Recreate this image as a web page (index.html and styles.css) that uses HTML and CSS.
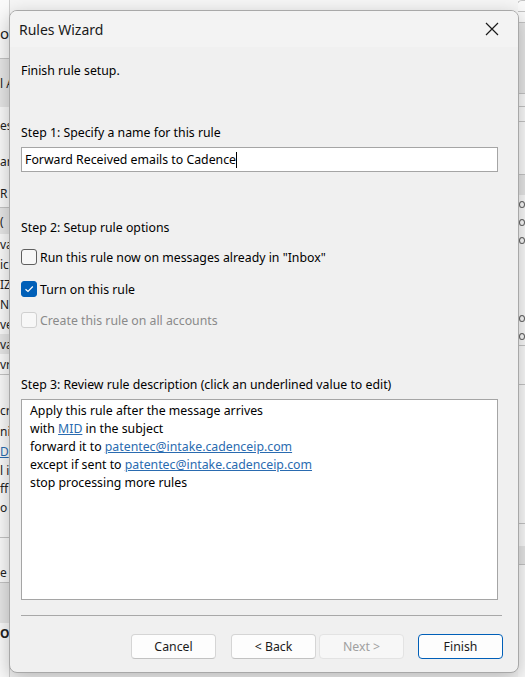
FILE: index.html
```html
<!DOCTYPE html>
<html lang="en">
<head>
  <meta charset="UTF-8">
  <meta name="viewport" content="width=device-width, initial-scale=1.0">
  <title>Rules Wizard</title>
  <link rel="stylesheet" href="styles.css">
</head>
<body>
  <!-- Outlook window behind the dialog -->
  <div class="desktop">
    <div class="left-pane">
      <div class="row h50 title-frag">ot</div>
      <div class="row h48 shade line-top">l A</div>
      <div class="row h36">es</div>
      <div class="row h36">ar</div>
      <div class="row h28">R</div>
      <div class="row h26 shade line-top">(</div>
      <div class="row h20">va</div>
      <div class="row h20">ic</div>
      <div class="row h20">IZ</div>
      <div class="row h20">N</div>
      <div class="row h20">ve</div>
      <div class="row h20 shade">va</div>
      <div class="row h20">vr</div>
      <div class="row h24 line-top"></div>
      <div class="row h22">cr</div>
      <div class="row h20">nis</div>
      <div class="row h20 link-frag">D</div>
      <div class="row h18">l i</div>
      <div class="row h18">ff</div>
      <div class="row h20">o</div>
      <div class="row h20"></div>
      <div class="row h24 line-top"></div>
      <div class="row h20">e</div>
      <div class="row h40 shade line-top"></div>
      <div class="row h20 bold">OI</div>
      <div class="row fill"></div>
    </div>
    <div class="middle"></div>
    <div class="right-pane">
      <div class="corner-box"></div>
      <div class="row h10 line-top"></div>
      <div class="row h70 shade line-top"></div>
      <div class="row h12 line-top"></div>
      <div class="row h14 line-top"></div>
      <div class="row h52 line-top"></div>
      <div class="row h20 shade line-top"></div>
      <div class="row h18 circle"><span class="dot"></span></div>
      <div class="row h18 circle"><span class="dot"></span></div>
      <div class="row h18 circle"><span class="dot"></span></div>
      <div class="row h60"></div>
      <div class="row h18 circle"><span class="dot"></span></div>
      <div class="row h18 circle"><span class="dot"></span></div>
      <div class="row h38 line-top"></div>
      <div class="row h138 line-top"></div>
      <div class="row h22 line-top"></div>
      <div class="row h18 shade"></div>
      <div class="row fill line-top"></div>
    </div>
  </div>

  <!-- Rules Wizard dialog -->
  <div class="dialog">
    <div class="title-bar">
      <span class="title">Rules Wizard</span>
      <span class="close">
        <svg width="14" height="14" viewBox="0 0 14 14">
          <path d="M1 1 L13 13 M13 1 L1 13" stroke="#1a1a1a" stroke-width="1.2" fill="none"/>
        </svg>
      </span>
    </div>

    <div class="dialog-body">
      <p class="intro">Finish rule setup.</p>

      <p class="step step-1">Step 1: Specify a name for this rule</p>
      <div class="name-input">Forward Received emails to Cadence<span class="caret"></span></div>

      <p class="step step-2">Step 2: Setup rule options</p>
      <label class="check-row first">
        <span class="box"></span>
        <span>Run this rule now on messages already in "Inbox"</span>
      </label>
      <label class="check-row">
        <span class="box checked">
          <svg width="10" height="8" viewBox="0 0 10 8">
            <path d="M1.5 4.2 L4 6.5 L8.8 1.5" stroke="#fff" stroke-width="1.2" fill="none"/>
          </svg>
        </span>
        <span>Turn on this rule</span>
      </label>
      <label class="check-row disabled">
        <span class="box"></span>
        <span>Create this rule on all accounts</span>
      </label>

      <p class="step step-3">Step 3: Review rule description (click an underlined value to edit)</p>
      <div class="description">
        <div>Apply this rule after the message arrives</div>
        <div>with <a href="#">MID</a> in the subject</div>
        <div>forward it to <a href="#">patentec@intake.cadenceip.com</a></div>
        <div>except if sent to <a href="#">patentec@intake.cadenceip.com</a></div>
        <div>stop processing more rules</div>
      </div>

      <div class="separator"></div>

      <div class="footer">
        <button class="btn">Cancel</button>
        <button class="btn back">&lt; Back</button>
        <button class="btn" disabled>Next &gt;</button>
        <button class="btn finish">Finish</button>
      </div>
    </div>
  </div>
</body>
</html>
```

FILE: styles.css
```css
/* General styling */
body {
  margin: 0;
  padding: 0;
  width: 525px;
  height: 677px;
  overflow: hidden;
  position: relative;
  font-family: 'Segoe UI', 'Noto Sans', sans-serif;
  font-size: 12.3px;
  color: #000;
  background-color: #f6f6f6;
}

/* Background window */
.desktop {
  display: flex;
  height: 677px;
}

.left-pane {
  width: 9px;
  display: flex;
  flex-direction: column;
  background-color: #fafafa;
  border-right: 1px solid #cfcfcf;
}

.middle {
  flex: 1;
  background-color: #f6f6f6;
}

.right-pane {
  width: 7px;
  display: flex;
  flex-direction: column;
  overflow: hidden;
  background-color: #fafafa;
}

.row {
  display: flex;
  align-items: center;
  white-space: nowrap;
  font-size: 12px;
  color: #222;
  flex-shrink: 0;
}

.row.fill { flex: 1; }
.shade { background-color: #e6e6e6; }
.line-top { border-top: 1px solid #c4c4c4; }
.title-frag { font-size: 15px; padding-top: 8px; }
.link-frag { color: #2a6bb0; text-decoration: underline; }
.bold { font-weight: bold; }

.dot {
  width: 5px;
  height: 5px;
  margin-left: 1px;
  border: 1px solid #666;
  border-radius: 50%;
}

.corner-box {
  height: 10px;
  flex-shrink: 0;
  border-top: 1px solid #c4c4c4;
  border-left: 1px solid #c4c4c4;
  border-top-left-radius: 6px;
  margin-left: -2px;
  background-color: #fafafa;
}

.h10 { height: 10px; }
.h12 { height: 12px; }
.h14 { height: 14px; }
.h18 { height: 18px; }
.h20 { height: 20px; }
.h22 { height: 22px; }
.h24 { height: 24px; }
.h26 { height: 26px; }
.h28 { height: 28px; }
.h36 { height: 36px; }
.h38 { height: 38px; }
.h40 { height: 40px; }
.h48 { height: 48px; }
.h50 { height: 50px; }
.h52 { height: 52px; }
.h60 { height: 60px; }
.h70 { height: 70px; }
.h138 { height: 138px; }

/* Dialog */
.dialog {
  position: absolute;
  left: 9px;
  top: 10px;
  width: 510px;
  height: 663px;
  box-sizing: border-box;
  border: 1px solid #a8a8a8;
  border-radius: 8px;
  background-color: #f0f0f0;
  box-shadow: 0 6px 20px rgba(0, 0, 0, 0.25);
  overflow: hidden;
  z-index: 10;
}

.title-bar {
  height: 36px;
  display: flex;
  align-items: center;
  justify-content: space-between;
  padding: 0 0 0 9px;
  background-color: #f3f3f3;
}

.title {
  font-size: 14px;
  color: #1a1a1a;
}

.close {
  width: 46px;
  height: 36px;
  display: flex;
  align-items: center;
  justify-content: center;
  margin-right: 3px;
}

.dialog-body {
  padding: 16px 20px 0 11px;
}

.dialog-body p {
  margin: 0;
  line-height: 16px;
}

.step-1 { margin-top: 46px !important; }
.step-2 { margin-top: 48px !important; }
.step-3 { margin-top: 47px !important; }

.name-input {
  margin-top: 6px;
  height: 25px;
  box-sizing: border-box;
  border: 1px solid #a5a5a5;
  background-color: #fff;
  padding: 0 3px;
  display: flex;
  align-items: center;
  white-space: nowrap;
}

.caret {
  display: inline-block;
  width: 1px;
  height: 16px;
  background-color: #000;
}

/* Checkboxes */
.check-row {
  display: flex;
  align-items: center;
  height: 20px;
  margin-top: 12px;
  gap: 3px;
}

.check-row.first { margin-top: 11px; }
.check-row.disabled { margin-top: 11px; color: #8a8a8a; }

.box {
  width: 16px;
  height: 16px;
  box-sizing: border-box;
  border: 1px solid #5f5f5f;
  border-radius: 3px;
  background-color: #f7f7f7;
  display: flex;
  align-items: center;
  justify-content: center;
}

.box.checked {
  background-color: #005fb8;
  border-color: #005fb8;
}

.disabled .box {
  border-color: #d0d0d0;
  background-color: #f7f7f7;
}

/* Rule description */
.description {
  margin-top: 6px;
  height: 201px;
  box-sizing: border-box;
  border: 1px solid #a5a5a5;
  background-color: #fff;
  padding: 2px 8px;
  line-height: 18px;
}

.description a {
  color: #2a6bb0;
  text-decoration: underline;
}

.separator {
  margin-top: 15px;
  margin-right: -4px;
  height: 1px;
  background-color: #a8a8a8;
}

/* Buttons */
.footer {
  margin-top: 18px;
  margin-right: -5px;
  display: flex;
  justify-content: flex-end;
}

.btn {
  width: 85px;
  height: 25px;
  box-sizing: border-box;
  font-family: inherit;
  font-size: 12.3px;
  color: #1a1a1a;
  background-color: #fdfdfd;
  border: 1px solid #d5d5d5;
  border-bottom-color: #c2c2c2;
  border-radius: 4px;
  margin-left: 3px;
  padding: 0;
}

.btn.back { margin-left: 15px; }
.btn.finish { margin-left: 14px; border-color: #005fb8; }

.btn:disabled {
  background-color: #f7f7f7;
  border-color: #e3e3e3;
  color: #a0a0a0;
}
```
